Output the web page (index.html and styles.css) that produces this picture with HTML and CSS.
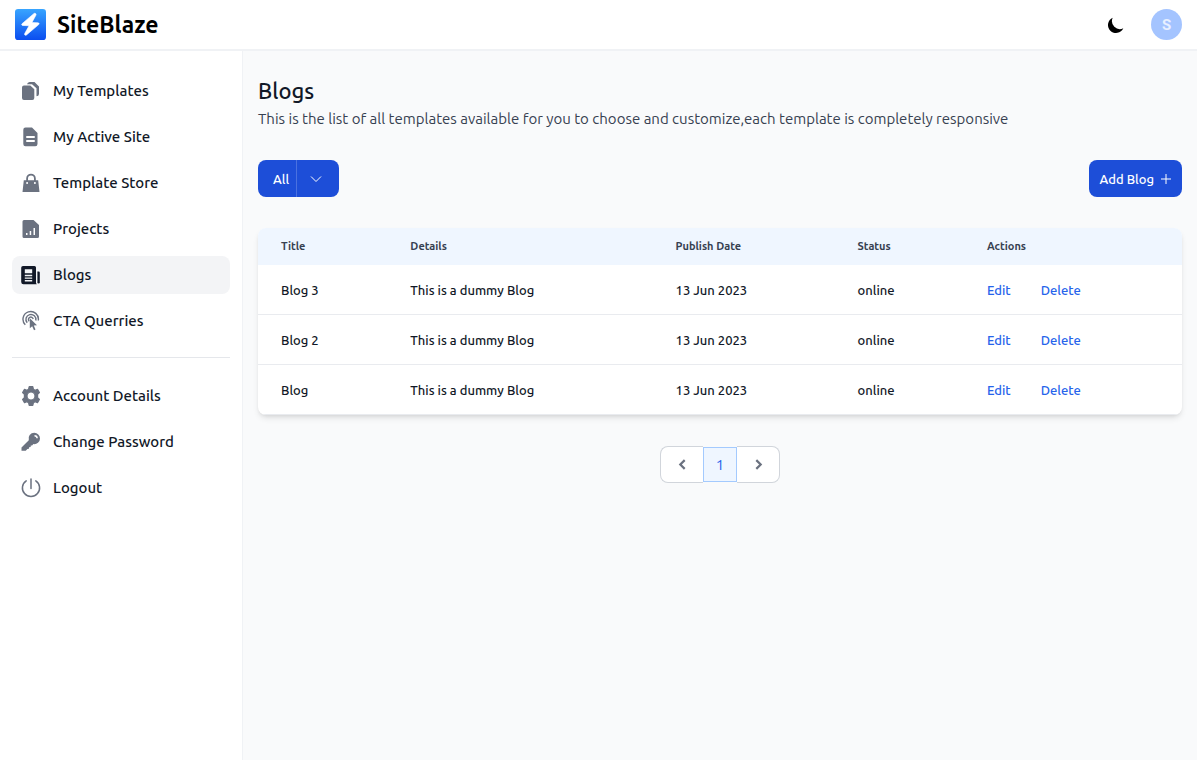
FILE: index.html
```html
<!DOCTYPE html>
<html lang="en">
<head>
<meta charset="utf-8">
<title>Blogs - SiteBlaze</title>
<link rel="stylesheet" href="styles.css">
</head>
<body>
<header class="topbar">
  <a class="brand" href="#">
    <svg class="brand-mark" viewBox="0 0 30 30" aria-hidden="true">
      <defs><linearGradient id="blaze" x1="0" y1="0" x2="0" y2="1"><stop offset="0" stop-color="#38a5ff"/><stop offset="1" stop-color="#0b4df0"/></linearGradient></defs>
      <rect width="30" height="30" rx="3" fill="url(#blaze)"/>
      <path d="M18.200 4.500 6.800 14.300c-.7.7-.3 1.600.6 1.600l6.200.3-4.200 7.600c-.6 1.200.6 2.200 1.700 1.300l11.800-10c.8-.7.4-1.700-.6-1.700l-5.900-.3 3.900-7.300c.6-1.200-1-2.200-2.100-1.300Z" fill="#fff" stroke="#fff" stroke-width=".6"/>
    </svg>
    <span class="brand-name">SiteBlaze</span>
  </a>
  <div class="topbar-tools">
    <button class="icon-button" type="button" aria-label="Dark mode">
      <svg class="moon" viewBox="0 0 20 20" aria-hidden="true"><path d="M17.293 13.293A8 8 0 016.707 2.707a8.001 8.001 0 1010.586 10.586z"/></svg>
    </button>
    <button class="avatar" type="button" aria-label="User menu">S</button>
  </div>
</header>
<div class="shell">
  <nav class="sidebar" aria-label="Main">
    <ul class="menu">
      <li><a class="menu-link" href="#"><svg class="menu-icon" viewBox="0 0 22 22" aria-hidden="true"><path d="M2 7.500a2 2 0 0 1 2-2h6.300l4 3.700V18a2 2 0 0 1-2 2H4a2 2 0 0 1-2-2Z"/><path d="M7 4.200A3 3 0 0 1 9.600 2h4.900L19 6.500V14a2.500 2.500 0 0 1-2.500 2.300V8.300L12 4.200Z"/></svg>My Templates</a></li>
      <li><a class="menu-link" href="#"><svg class="menu-icon" viewBox="0 0 22 22" aria-hidden="true"><path fill-rule="evenodd" d="M5.500 1.500H12L17.500 7v11a2.200 2.200 0 0 1-2.200 2.200H5.500A2.200 2.200 0 0 1 3.300 18V3.700a2.200 2.200 0 0 1 2.200-2.200ZM7 10a1 1 0 0 0 0 2h7a1 1 0 0 0 0-2Zm0 4a1 1 0 0 0 0 2h7a1 1 0 0 0 0-2Z"/></svg>My Active Site</a></li>
      <li><a class="menu-link" href="#"><svg class="menu-icon" viewBox="0 0 22 22" aria-hidden="true"><path fill-rule="evenodd" d="M3.800 8.200h2.400V6.500a4.800 4.800 0 0 1 9.600 0v1.700h2.400L19.500 20h-17ZM8 8.200h6V6.500a3 3 0 0 0-6 0Zm-.9 1.700a1 1 0 1 0 0 2 1 1 0 0 0 0-2Zm7.800 0a1 1 0 1 0 0 2 1 1 0 0 0 0-2Z"/></svg>Template Store</a></li>
      <li><a class="menu-link" href="#"><svg class="menu-icon" viewBox="0 0 22 22" aria-hidden="true"><path fill-rule="evenodd" d="M4 2h9.500L19 7v11.500a1.500 1.500 0 0 1-1.500 1.500H4a1.500 1.500 0 0 1-1.500-1.500v-15A1.500 1.500 0 0 1 4 2Zm2 13v2h1.500v-2Zm3.700-2v4h1.500v-4Zm3.800-3v7H15v-7Z"/></svg>Projects</a></li>
      <li><a class="menu-link menu-link-active" href="#" aria-current="page"><svg class="menu-icon" viewBox="0 0 22 22" aria-hidden="true"><path fill-rule="evenodd" d="M3 2h11.500A1.500 1.500 0 0 1 16 3.500V19l.8 1.200H3.500A2.300 2.300 0 0 1 1.200 18V3.800A1.800 1.800 0 0 1 3 2Zm1.800 3.200v4h7.400v-4Zm0 5.600v1.400h7.400v-1.400Zm0 2.700v1.300h7.400v-1.300Zm0 2.600v1.300h7.400v-1.300Z"/><path d="M17.400 7.500h1.200A1.200 1.200 0 0 1 19.800 8.700v9.500a1.200 1.200 0 0 1-2.400 0Z"/></svg>Blogs</a></li>
      <li><a class="menu-link" href="#"><svg class="menu-icon" viewBox="0 0 22 22" aria-hidden="true"><g fill="none" stroke="currentColor" stroke-width="1.400"><path d="M5.300 14.700A7.700 7.700 0 1 1 18.300 10.500"/><path d="M7.200 12.800A5 5 0 1 1 15.800 10.500"/><path d="M9.200 11.200A2.400 2.400 0 1 1 13.200 9"/></g><path d="m9.800 8.200 7.200 7-3.200.3 1.700 4.100-1.500.7-1.800-4.100-2.400 2.100Z"/></svg>CTA Querries</a></li>
    </ul>
    <ul class="menu menu-account">
      <li><a class="menu-link" href="#"><svg class="menu-icon" viewBox="0 0 22 22" aria-hidden="true"><path fill-rule="evenodd" stroke="currentColor" stroke-width="1.200" stroke-linejoin="round" d="M9.200 1.700h3.600l.6 2.500 1.700 1 2.400-.8 1.900 3.200-1.800 1.800v3.200l1.800 1.800-1.900 3.200-2.400-.8-1.700 1-.6 2.500H9.200l-.6-2.500-1.700-1-2.400.8-1.900-3.200 1.800-1.800V9.400L2.600 7.600l1.900-3.200 2.400.8 1.700-1ZM11 7a4 4 0 1 0 0 8 4 4 0 0 0 0-8Z"/></svg>Account Details</a></li>
      <li><a class="menu-link" href="#"><svg class="menu-icon" viewBox="0 0 22 22" aria-hidden="true"><path fill-rule="evenodd" d="M14.300 1.700a5.800 5.800 0 0 1 5.700 5.700 5.800 5.800 0 0 1-6.600 5.700l-1.300 1.300-1.300.1-.2 1.600-1.500.1-.2 1.600-1.500.2-1.700 1.800H1.500v-3.200l7.300-7.400a5.800 5.800 0 0 1 5.500-7.500Zm.2 2.200v1.500a1.900 1.900 0 0 1 1.900 1.900h1.500a3.400 3.400 0 0 0-3.400-3.400Z"/></svg>Change Password</a></li>
      <li><a class="menu-link" href="#"><svg class="menu-icon" viewBox="0 0 22 22" aria-hidden="true"><path d="M11 2v9.500M6.200 3.800a8.600 8.600 0 1 0 9.600 0" fill="none" stroke="currentColor" stroke-width="1.500" stroke-linecap="round"/></svg>Logout</a></li>
    </ul>
  </nav>
  <main class="content">
    <h1 class="title">Blogs</h1>
    <p class="lead">This is the list of all templates available for you to choose and customize,each template is completely responsive</p>
    <div class="toolbar">
      <div class="split">
        <button class="button split-main" type="button">All</button>
        <button class="button split-toggle" type="button" aria-label="Filter options"><svg class="button-icon" viewBox="0 0 12 12" aria-hidden="true"><path d="m1 3.500 5 5 5-5"/></svg></button>
      </div>
      <button class="button add-button" type="button">Add Blog <svg class="button-icon" viewBox="0 0 12 12" aria-hidden="true"><path d="M6 1v10M1 6h10"/></svg></button>
    </div>
    <div class="card">
      <table class="table">
        <colgroup><col class="col-title"><col class="col-details"><col class="col-date"><col class="col-status"><col></colgroup>
        <thead><tr><th scope="col">Title</th><th scope="col">Details</th><th scope="col">Publish Date</th><th scope="col">Status</th><th scope="col">Actions</th></tr></thead>
        <tbody>
          <tr><td>Blog 3</td><td>This is a dummy Blog</td><td>13 Jun 2023</td><td>online</td><td><div class="actions"><a href="#">Edit</a><a href="#">Delete</a></div></td></tr>
          <tr><td>Blog 2</td><td>This is a dummy Blog</td><td>13 Jun 2023</td><td>online</td><td><div class="actions"><a href="#">Edit</a><a href="#">Delete</a></div></td></tr>
          <tr><td>Blog</td><td>This is a dummy Blog</td><td>13 Jun 2023</td><td>online</td><td><div class="actions"><a href="#">Edit</a><a href="#">Delete</a></div></td></tr>
        </tbody>
      </table>
    </div>
    <nav class="pager" aria-label="Pagination">
      <button class="page page-prev" type="button" aria-label="Previous"><svg class="page-icon" viewBox="0 0 10 10" aria-hidden="true"><path d="M7 1 3 5l4 4"/></svg></button>
      <button class="page page-current" type="button" aria-current="page">1</button>
      <button class="page page-next" type="button" aria-label="Next"><svg class="page-icon" viewBox="0 0 10 10" aria-hidden="true"><path d="m3 1 4 4-4 4"/></svg></button>
    </nav>
  </main>
</div>
</body>
</html>
```
FILE: styles.css
```css
* { box-sizing: border-box; }
body {
  margin: 0;
  min-height: 100vh;
  display: flex;
  flex-direction: column;
  background: #f9fafb;
  color: #111827;
  font-family: Ubuntu, "Noto Sans", sans-serif;
  font-size: 15px;
  line-height: 22px;
}
a { color: inherit; text-decoration: none; }
button { font: inherit; color: inherit; border: 0; padding: 0; background: none; cursor: pointer; }
svg { display: block; flex: none; }

.topbar {
  display: flex;
  align-items: center;
  justify-content: space-between;
  padding: 9px 15px;
  background: #fff;
  border-bottom: 2px solid #f0f2f5;
}
.brand { display: flex; align-items: center; gap: 11px; color: #000; }
.brand-mark { width: 31px; height: 31px; }
.brand-name { font-size: 23px; line-height: 28px; font-weight: 700; }
.topbar-tools { display: flex; align-items: center; gap: 25px; }
.moon { width: 20px; height: 20px; fill: #000; }
.avatar {
  width: 31px;
  height: 31px;
  border-radius: 50%;
  background: #a4c4ff;
  color: #e8f0ff;
  font-family: Roboto, sans-serif;
  font-weight: 700;
  text-align: center;
}

.shell { flex: 1; display: flex; }
.sidebar {
  flex: none;
  width: 243px;
  padding: 21px 12px;
  background: #fff;
  border-right: 1px solid #f0f2f5;
}
.menu { list-style: none; margin: 0; padding: 0; display: flex; flex-direction: column; gap: 8px; }
.menu-account { margin-top: 17px; padding-top: 19px; border-top: 1px solid #e5e7eb; }
.menu-link {
  display: flex;
  align-items: center;
  gap: 11px;
  padding: 8px;
  border-radius: 8px;
  font-weight: 550;
}
.menu-icon { width: 22px; height: 22px; fill: currentColor; color: #6b7280; }
.menu-link-active { background: #f3f4f6; }
.menu-link-active .menu-icon { color: #111827; }

.content { flex: 1; min-width: 0; padding: 25px 15px; }
.title { margin: 0; font-size: 22px; line-height: 30px; font-weight: 550; }
.lead { margin: 0; line-height: 26px; color: #374151; }
.toolbar { display: flex; justify-content: space-between; margin: 28px 0 31px; }
.split { display: flex; }
.button {
  display: flex;
  align-items: center;
  justify-content: center;
  gap: 6px;
  height: 37px;
  background: #1d4ed8;
  border-radius: 8px;
  color: #fff;
  font-size: 13px;
  font-weight: 550;
}
.split-main { padding: 0 7px 0 15px; border-radius: 8px 0 0 8px; border-right: 1px solid #4a71e0; }
.split-toggle { width: 42px; padding-right: 4px; border-radius: 0 8px 8px 0; }
.add-button { padding: 0 10px 0 11px; }
.button-icon { width: 12px; height: 12px; fill: none; stroke: #fff; stroke-width: 1; }

.card {
  overflow: hidden;
  background: #fff;
  border-radius: 8px;
  box-shadow: 0 4px 6px -1px rgba(0, 0, 0, 0.1), 0 2px 4px -2px rgba(0, 0, 0, 0.1);
}
.table { width: 100%; table-layout: fixed; border-collapse: collapse; text-align: left; font-size: 13px; line-height: 20px; }
.col-title { width: 14%; }
.col-details { width: 28.7%; }
.col-date { width: 19.7%; }
.col-status { width: 14%; }
.table th { padding: 8px 23px 9px; background: #eff6ff; color: #374151; font-size: 11px; font-weight: 700; }
.table td { padding: 15px 23px 14px; font-weight: 550; white-space: nowrap; }
.table tbody tr { border-bottom: 1px solid #e9ebef; }
.actions { display: flex; gap: 30px; color: #2563eb; }

.pager { display: flex; justify-content: center; align-items: center; margin-top: 31px; }
.page {
  display: flex;
  align-items: center;
  justify-content: center;
  width: 43px;
  height: 37px;
  background: #fff;
  border: 1px solid #d1d5db;
}
.page-prev { border-right: 0; border-radius: 8px 0 0 8px; }
.page-next { border-left: 0; border-radius: 0 8px 8px 0; }
.page-current { width: 34px; height: 35px; background: #eff6ff; border-color: #a4cafe; color: #2563eb; }
.page-icon { width: 11px; height: 11px; fill: none; stroke: #6b7280; stroke-width: 2; }
```
